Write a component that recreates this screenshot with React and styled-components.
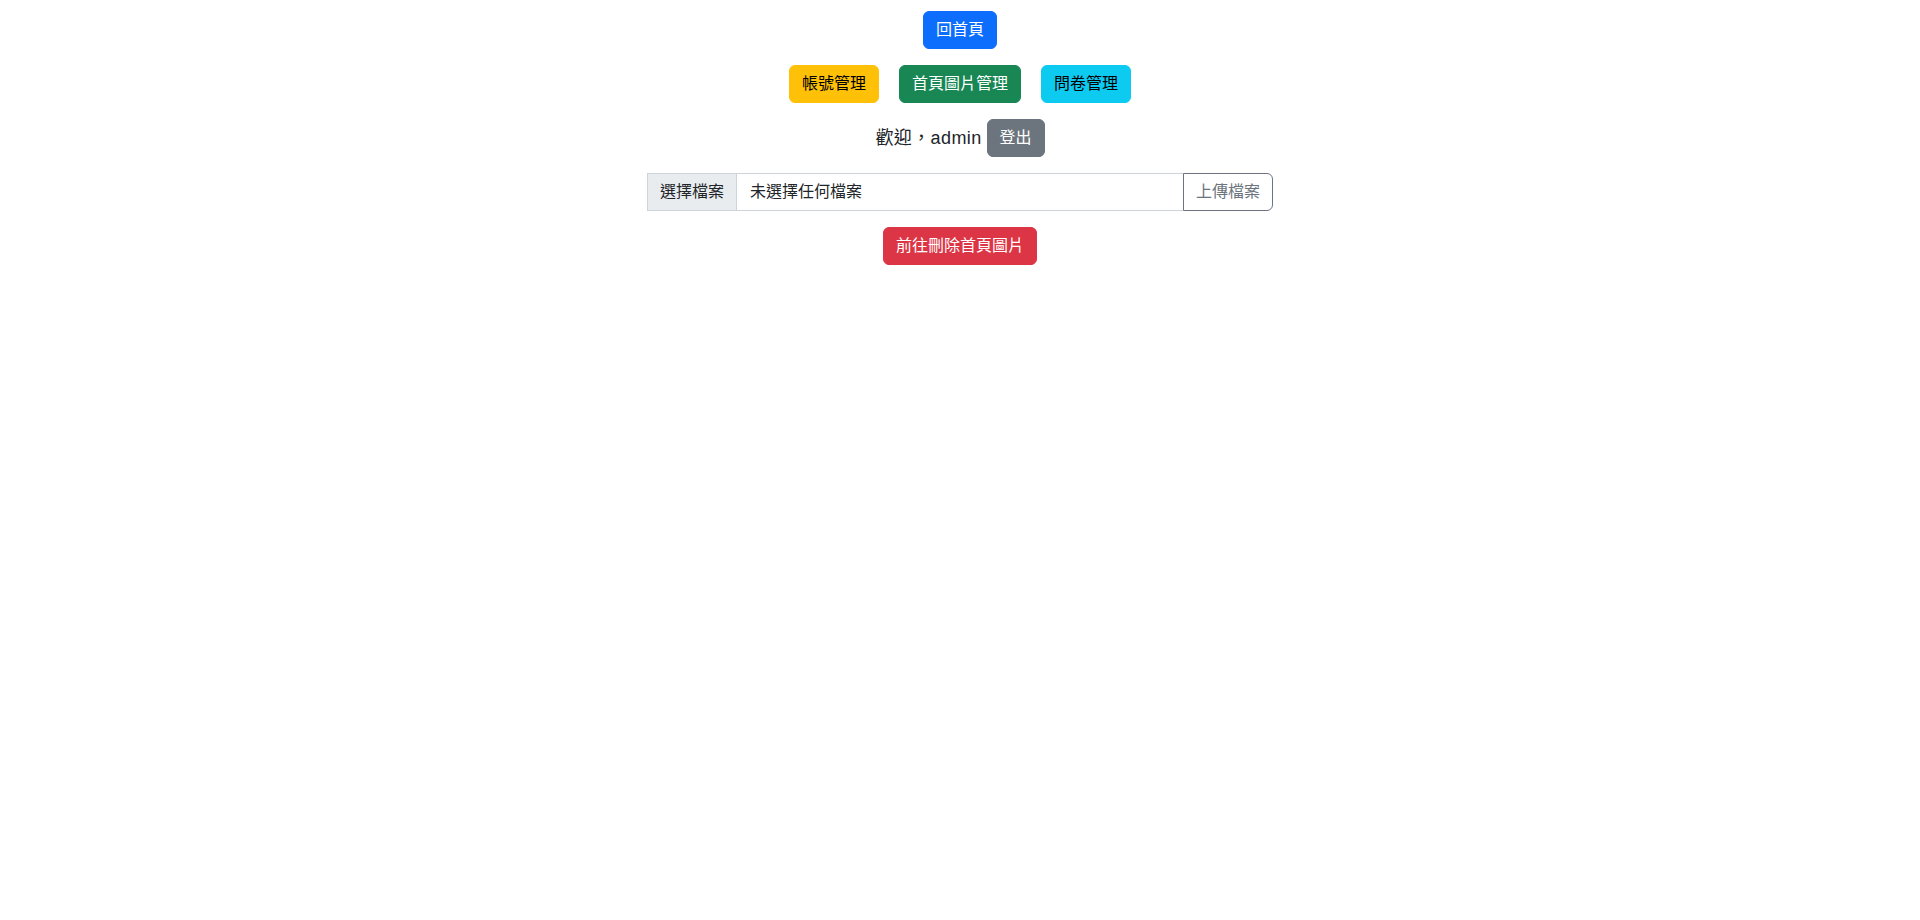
import React from 'react';
import styled, { createGlobalStyle } from 'styled-components';

const GlobalStyle = createGlobalStyle`
  body {
    margin: 0;
    background: #ffffff;
    color: #212529;
    font-family: 'Liberation Sans', 'Noto Sans CJK TC', sans-serif;
    font-size: 16px;
    line-height: 1.5;
  }
`;

const colors = {
  primary: { bg: '#0d6efd', fg: '#ffffff' },
  warning: { bg: '#ffc107', fg: '#000000' },
  success: { bg: '#198754', fg: '#ffffff' },
  info: { bg: '#0dcaf0', fg: '#000000' },
  secondary: { bg: '#6c757d', fg: '#ffffff' },
  danger: { bg: '#dc3545', fg: '#ffffff' },
};

const Page = styled.div`
  display: flex;
  flex-direction: column;
  align-items: center;
  gap: 16px;
  padding-top: 11px;
`;

const Row = styled.div`
  display: flex;
  align-items: center;
  justify-content: center;
  gap: ${(p) => p.$gap || 0}px;
`;

const Button = styled.button`
  box-sizing: border-box;
  height: 38px;
  padding: 6px 12px;
  border: 1px solid ${(p) => colors[p.$variant].bg};
  border-radius: 6px;
  background: ${(p) => colors[p.$variant].bg};
  color: ${(p) => colors[p.$variant].fg};
  font-family: 'Liberation Sans', 'Noto Sans CJK TC', sans-serif;
  font-size: 16px;
  line-height: 24px;
  cursor: pointer;
`;

const Welcome = styled.span`
  font-size: 18px;
  line-height: 24px;
  letter-spacing: 0.4px;
  color: #212529;
  margin-right: 5px;
`;

const InputGroup = styled.div`
  display: flex;
  width: 626px;
  height: 38px;
`;

const FileBox = styled.label`
  box-sizing: border-box;
  flex: 1;
  display: flex;
  border: 1px solid #ced4da;
  border-right: none;
  background: #ffffff;
  cursor: pointer;
`;

const FileButton = styled.span`
  box-sizing: border-box;
  width: 89px;
  padding: 6px 12px;
  background: #e9ecef;
  border-right: 1px solid #ced4da;
  font-size: 16px;
  line-height: 24px;
  color: #212529;
  white-space: nowrap;
`;

const FileName = styled.span`
  padding: 6px 13px;
  font-size: 16px;
  line-height: 24px;
  color: #212529;
`;

const OutlineButton = styled.button`
  box-sizing: border-box;
  width: 90px;
  height: 38px;
  padding: 6px 12px;
  border: 1px solid #6c757d;
  border-radius: 0 6px 6px 0;
  background: #ffffff;
  color: #6c757d;
  font-family: 'Liberation Sans', 'Noto Sans CJK TC', sans-serif;
  font-size: 16px;
  line-height: 24px;
  white-space: nowrap;
  cursor: pointer;
`;

export default function App() {
  return (
    <>
      <GlobalStyle />
      <Page>
        <Button $variant="primary">回首頁</Button>
        <Row $gap={20}>
          <Button $variant="warning">帳號管理</Button>
          <Button $variant="success">首頁圖片管理</Button>
          <Button $variant="info">問卷管理</Button>
        </Row>
        <Row>
          <Welcome>歡迎，admin</Welcome>
          <Button $variant="secondary">登出</Button>
        </Row>
        <InputGroup>
          <FileBox>
            <FileButton>選擇檔案</FileButton>
            <FileName>未選擇任何檔案</FileName>
          </FileBox>
          <OutlineButton>上傳檔案</OutlineButton>
        </InputGroup>
        <Button $variant="danger">前往刪除首頁圖片</Button>
      </Page>
    </>
  );
}
